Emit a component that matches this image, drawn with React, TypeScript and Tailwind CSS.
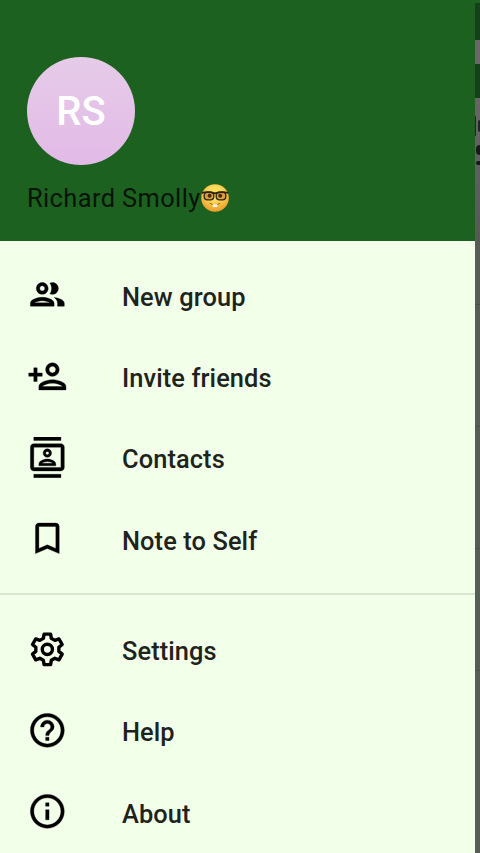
import {
  MdOutlineGroup,
  MdOutlinePersonAdd,
  MdOutlineContacts,
  MdBookmarkBorder,
  MdHelpOutline,
  MdInfoOutline,
} from "react-icons/md";

type IconProps = { className?: string };
type Item = { label: string; icon: React.ComponentType<IconProps> };

function Gear({ className }: IconProps) {
  const outline = Array.from({ length: 6 }, (_, tooth) => {
    const corners: [number, number][] = [
      [6.9, -20],
      [9.2, -12],
      [9.2, 12],
      [6.9, 20],
    ];
    return corners.map(([radius, offset]) => {
      const angle = ((tooth * 60 - 90 + offset) * Math.PI) / 180;
      return `${(12 + radius * Math.cos(angle)).toFixed(2)},${(12 + radius * Math.sin(angle)).toFixed(2)}`;
    });
  })
    .flat()
    .join(" ");
  return (
    <svg viewBox="0 0 24 24" className={className} fill="none">
      <polygon points={outline} strokeWidth="2" strokeLinejoin="round" />
      <circle cx="12" cy="12" r="3" strokeWidth="2" />
    </svg>
  );
}

const primary: Item[] = [
  { label: "New group", icon: MdOutlineGroup },
  { label: "Invite friends", icon: MdOutlinePersonAdd },
  { label: "Contacts", icon: MdOutlineContacts },
  { label: "Note to Self", icon: MdBookmarkBorder },
];

const secondary: Item[] = [
  { label: "Settings", icon: Gear },
  { label: "Help", icon: MdHelpOutline },
  { label: "About", icon: MdInfoOutline },
];

function NerdFace() {
  return (
    <svg viewBox="0 0 28 28" className="size-7 shrink-0" role="img" aria-label="nerd face">
      <defs>
        <radialGradient id="face" cx="50%" cy="35%" r="62%">
          <stop offset="0.4" stopColor="#fddc5c" />
          <stop offset="1" stopColor="#eb9f2c" />
        </radialGradient>
      </defs>
      <circle cx="14" cy="14" r="13.8" fill="url(#face)" />
      <rect x="3.2" y="8.2" width="9.6" height="7.6" rx="3.4" fill="#d9a03c" stroke="#2b2415" strokeWidth="1.3" />
      <rect x="15.2" y="8.2" width="9.6" height="7.6" rx="3.4" fill="#d9a03c" stroke="#2b2415" strokeWidth="1.3" />
      <path d="M.8 9Q7 7.2 14 9.4Q21 7.2 27.2 9" fill="none" stroke="#2b2415" strokeWidth="1.8" />
      <circle cx="8.6" cy="11.8" r="2" fill="#4a2b0c" />
      <circle cx="19.2" cy="11.8" r="2" fill="#4a2b0c" />
      <path d="M8.8 19.2Q14 22.6 19.2 19.2" fill="none" stroke="#a8601e" strokeWidth="1" />
      <path d="M11.8 20.2h4.4v2.8h-4.4z" fill="#fff8e8" />
    </svg>
  );
}

function Row({ label, icon: Icon }: Item) {
  return (
    <li className="flex h-[81.3px] items-center pl-[26.5px]">
      <Icon className="mb-px size-[40.7px] shrink-0 stroke-black stroke-[0.2] text-black [&>path[fill=none]]:stroke-none" />
      <span className="ml-[54.8px] pt-[3px] text-[25.4px] leading-8 font-medium tracking-[0.1px] text-[#1e231c]">
        {label}
      </span>
    </li>
  );
}

export default function App() {
  return (
    <div className="flex h-[853px] w-[480px] overflow-hidden bg-[#565d54] font-[Roboto,sans-serif]">
      <aside className="flex w-[474.5px] shrink-0 flex-col bg-[#f2ffe9]">
        <header className="flex h-[240.7px] shrink-0 flex-col bg-[#1d6120] pt-[57px] pl-[27px]">
          <div className="flex size-[108px] items-center justify-center rounded-full bg-linear-to-b from-[#e6cbe9] to-[#e2bae6] pt-px text-[40px] font-medium text-white">
            RS
          </div>
          <div className="mt-[17px] flex items-center text-[25.4px] leading-8 tracking-[0.4px] text-[#051405]">
            <span>Richard Smolly</span>
            <NerdFace />
          </div>
        </header>
        <ul className="pt-[14px]">
          {primary.map((item) => (
            <Row key={item.label} {...item} />
          ))}
        </ul>
        <hr className="mt-[13px] h-[2px] shrink-0 border-0 bg-[#d9e4d1]" />
        <ul className="pt-[14px]">
          {secondary.map((item) => (
            <Row key={item.label} {...item} />
          ))}
        </ul>
      </aside>
      <div className="flex flex-1 flex-col bg-[#565d54]">
        <div className="h-[3px] bg-[#1e6121]" />
        <div className="h-[37px] bg-[#15411a]" />
        <div className="h-[24px] bg-[#686868]" />
        <div className="h-[34px] bg-[#15411a]" />
        <div className="flex h-[142px] flex-col bg-linear-to-b from-[#666666] to-[#565a55] pt-[18px]">
          <div className="flex h-[20px] items-center justify-between">
            <div className="h-[20px] w-px bg-[#222622]" />
            <div className="h-[12px] w-[2px] rounded-l-full bg-[#222622]" />
          </div>
          <div className="mt-[9px] h-[10px] w-[4px] self-end rounded-l-full bg-[#161916]" />
          <div className="mt-[6px] h-[4px] w-[4px] self-end rounded-l-full bg-[#161916]" />
        </div>
        <div className="mt-[64px] h-px bg-[#4b514a]" />
        <div className="mt-[121px] h-px bg-[#4b514a]" />
        <div className="mt-[121px] h-px bg-[#4f554e]" />
        <div className="mt-[121px] h-px bg-[#4b514a]" />
      </div>
    </div>
  );
}
